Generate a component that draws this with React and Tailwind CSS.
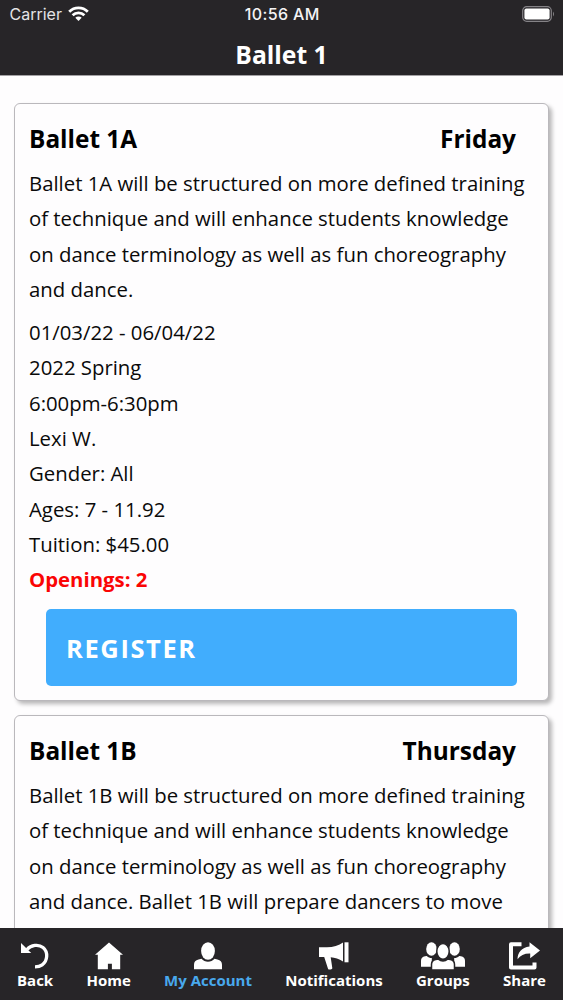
const navItem = "flex flex-col items-center font-['Open_Sans',sans-serif] text-[15px] leading-[20px] font-bold whitespace-nowrap";

function StatusBar() {
  return (
    <div className="flex h-[28px] items-center justify-between pr-[8px] pl-[9.5px] font-['Inter',sans-serif]">
      <div className="flex w-[158px] items-center gap-[6px] text-[#e4e3e5]">
        <span className="text-[16px]">Carrier</span>
        <svg width="21" height="16" viewBox="0 0 21 16" fill="none" stroke="#fff" strokeWidth="2.8">
          <path d="M1.2 5.7a13.2 13.2 0 0 1 18.6 0" />
          <path d="M4.6 9.3a8.4 8.4 0 0 1 11.8 0" />
          <path d="M7.3 11.8a4.6 4.6 0 0 1 6.4 0L10.5 15z" fill="#fff" stroke="none" />
        </svg>
      </div>
      <span className="text-[16px] font-medium tracking-[0.4px] text-[#f4f3f5]">10:56 AM</span>
      <div className="flex w-[158px] justify-end">
        <svg width="33" height="16" viewBox="0 0 33 16">
          <rect x="0.7" y="0.7" width="28.6" height="14.6" rx="4" fill="none" stroke="#858387" strokeWidth="1.2" />
          <rect x="2.4" y="2.6" width="25.2" height="10.8" rx="2" fill="#fff" />
          <path d="M31 5.5q2 2.5 0 5z" fill="#858387" />
        </svg>
      </div>
    </div>
  );
}

function Card({ title, day, lines, children }) {
  return (
    <section className="mb-[14px] rounded-[6px] border border-[#bab8bc] bg-[#fefdfe] px-[14px] pt-[16px] pb-[14px] shadow-[3px_3px_4px_rgba(0,0,0,0.28)]">
      <div className="flex justify-between pr-[18px] text-[24.4px] leading-[38px] font-bold text-black">
        <h2>{title}</h2>
        <span>{day}</span>
      </div>
      <div className="pt-[8px] text-[20.35px] leading-[35.3px] whitespace-nowrap text-[#0a0a0a]">
        {lines.map((line) => <p key={line}>{line}</p>)}
      </div>
      {children}
    </section>
  );
}

export default function App() {
  return (
    <div className="flex h-[1000px] w-[563px] flex-col overflow-hidden bg-[#fefdfe] font-['Open_Sans',sans-serif]">
      <header className="h-[76px] shrink-0 border-b border-[#a3a1a4] bg-[#272528] text-white">
        <StatusBar />
        <h1 className="pt-[9px] text-center text-[24.7px] leading-[36px] font-bold">Ballet 1</h1>
      </header>

      <main className="min-h-0 flex-1 overflow-hidden pt-[27px] pr-[14px] pl-[14px]">
        <Card
          title="Ballet 1A"
          day="Friday"
          lines={[
            "Ballet 1A will be structured on more defined training",
            "of technique and will enhance students knowledge",
            "on dance terminology as well as fun choreography",
            "and dance.",
          ]}
        >
          <div className="pt-[8px] text-[20.35px] leading-[35.3px] text-[#0a0a0a]">
            <p>01/03/22 - 06/04/22</p>
            <p>2022 Spring</p>
            <p>6:00pm-6:30pm</p>
            <p>Lexi W.</p>
            <p>Gender: All</p>
            <p>Ages: 7 - 11.92</p>
            <p>Tuition: $45.00</p>
            <p className="font-bold text-[#fa0505]">Openings: 2</p>
          </div>
          <button className="mt-[11.4px] ml-[17px] flex h-[77px] w-[470.5px] items-center rounded-[5px] bg-[#41adfd] pt-[1px] pl-[20px] text-[25.5px] font-bold tracking-[1.6px] text-white">
            REGISTER
          </button>
        </Card>
        <Card
          title="Ballet 1B"
          day="Thursday"
          lines={[
            "Ballet 1B will be structured on more defined training",
            "of technique and will enhance students knowledge",
            "on dance terminology as well as fun choreography",
            "and dance. Ballet 1B will prepare dancers to move",
          ]}
        />
      </main>

      <nav className="flex h-[72px] shrink-0 items-start justify-between bg-[#272528] pt-[14px] pr-[17px] pl-[17px] text-white">
        <div className={navItem}>
          <svg width="28" height="28" viewBox="0 0 28 28" fill="none">
            <path d="M6 7.5C10 3 17.5 1.8 22 5.5c5.5 4.5 4.6 13.6-.8 17.3-1.9 1.4-4.4 2.1-7.2 2.1" stroke="#fff" strokeWidth="3.3" />
            <path d="M0 1v10h10.2z" fill="#fff" />
          </svg>
          <span>Back</span>
        </div>
        <div className={navItem}>
          <svg width="28" height="28" viewBox="0 0 28 28" fill="#fff">
            <path d="M14 .5 28 12.8h-2.8v14.5h-8.3v-5.5h-4v5.5H2.8V12.8H0z" />
          </svg>
          <span>Home</span>
        </div>
        <div className={navItem + " text-[#49a9ed]"}>
          <svg width="28" height="28" viewBox="0 0 28 28" fill="#fff">
            <ellipse cx="14" cy="9" rx="6.9" ry="8.8" />
            <path d="M0 27.2v-4.5c0-3 1.6-4.7 4.5-5.3l3-.6c1.7 2 4 3 6.5 3s4.8-1 6.5-3l3 .6c2.9.6 4.5 2.3 4.5 5.3v4.5z" />
          </svg>
          <span>My Account</span>
        </div>
        <div className={navItem}>
          <svg width="30" height="28" viewBox="0 0 30 28" fill="#fff">
            <path d="M0 5.3h8C14 5.3 20 3.3 24 .5v19c-4-3-8-4-12.3-4.3l1.6 10.9c.2 1.2-3.7 2.1-4.2.8L5.2 14.9H0z" />
            <rect x="25.5" y=".3" width="4" height="20" />
          </svg>
          <span>Notifications</span>
        </div>
        <div className={navItem}>
          <svg width="44" height="28" viewBox="0 0 44 28" fill="#fff">
            <ellipse cx="10.5" cy="7" rx="5.3" ry="6.8" />
            <ellipse cx="33.5" cy="7" rx="5.3" ry="6.8" />
            <path d="M0 24.7v-6c0-2.5 1.5-4 4-4.5l1.8-.3c1.5 1.4 3 2 5 2.2v8.6zM44 24.7v-6c0-2.5-1.5-4-4-4.5l-1.8-.3c-1.5 1.4-3 2-5 2.2v8.6z" />
            <g stroke="#272528" strokeWidth="1.5">
              <ellipse cx="22" cy="9.4" rx="6.2" ry="7.9" />
              <path d="M10.5 27.9v-5.4c0-2.8 1.5-4.3 4.2-4.9l2.7-.5c2.7 2.4 6.5 2.4 9.2 0l2.7.5c2.7.6 4.2 2.1 4.2 4.9v5.4z" />
            </g>
          </svg>
          <span>Groups</span>
        </div>
        <div className={navItem}>
          <svg width="31" height="28" viewBox="0 0 31 28" fill="none">
            <path d="M12.5 2.2H2v23.2h23.5v-5" stroke="#fff" strokeWidth="4" strokeLinejoin="round" />
            <path d="M20.5.2 31 8.4l-9.8 7.8v-4.8C15.5 11.2 11.5 13.2 8.5 17.2 8.7 10.7 12.5 5.4 20.5 4.5z" fill="#fff" />
          </svg>
          <span>Share</span>
        </div>
      </nav>
    </div>
  );
}
